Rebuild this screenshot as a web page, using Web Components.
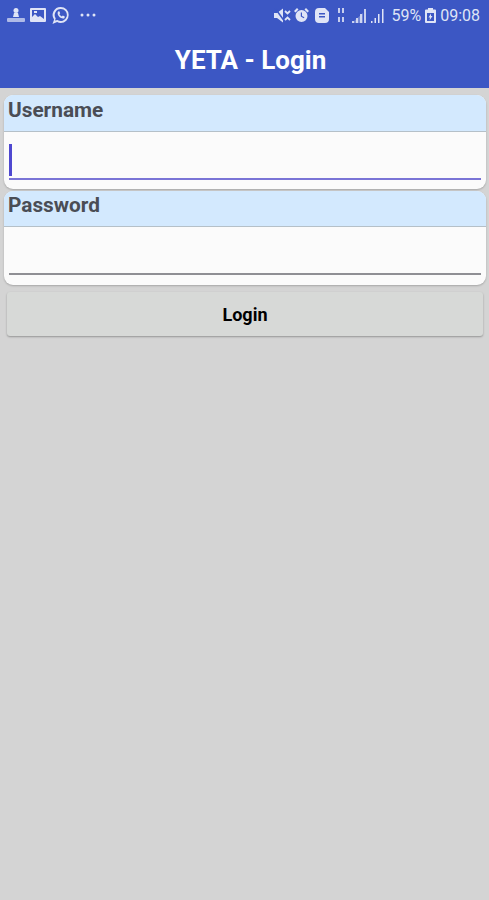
<!DOCTYPE html>
<html>
<head>
<meta charset="utf-8">
<title>YETA - Login</title>
<style>
  html, body { margin: 0; padding: 0; height: 100%; }
  body { background: #d4d4d4; font-family: Roboto, "Liberation Sans", sans-serif; }
</style>
</head>
<body>
<status-bar></status-bar>
<app-header>YETA - Login</app-header>
<login-form>
  <login-field label="Username" focused style="--label-height: 37px; --label-line: 31px"></login-field>
  <login-field label="Password"></login-field>
  <login-button>Login</login-button>
</login-form>

<script>
class StatusBar extends HTMLElement {
  constructor() {
    super();
    this.attachShadow({ mode: 'open' });
    this.shadowRoot.innerHTML = `
      <style>
        :host {
          display: flex;
          justify-content: space-between;
          align-items: center;
          height: 30px;
          background: #3c57c4;
          color: #dfe4f6;
          font: 400 16px Roboto, "Liberation Sans", sans-serif;
        }
        .side { display: flex; align-items: center; }
        .left { padding-left: 7px; }
        .right { padding-right: 9px; }
        svg { display: block; fill: #dfe4f6; }
      </style>
      <div class="side left">
        <svg width="18" height="18" viewBox="0 0 18 18" style="margin-right:5px">
          <circle cx="9" cy="4.500" r="2.500"/><path d="M7 7h4l1 4H6z"/>
          <rect x="0" y="12" width="18" height="4" rx="1" opacity=".7"/>
        </svg>
        <svg width="16" height="14" viewBox="0 0 16 14" style="margin-right:6px">
          <path fill-rule="evenodd" d="M1 0h14a1 1 0 0 1 1 1v12a1 1 0 0 1-1 1H1a1 1 0 0 1-1-1V1a1 1 0 0 1 1-1zm1 2v7l3-3 3 3 2-1 4 3V2zm2 1h3v2H4z"/>
        </svg>
        <svg width="17" height="17" viewBox="0 0 17 17" style="margin-right:10px">
          <path fill-rule="evenodd" d="M8.700 0a8 8 0 0 1 0 16 8 8 0 0 1-3.600-.9L.5 17l1.600-4.400A8 8 0 0 1 8.700 0zm0 2a6 6 0 0 0-5 9.300l-.6 2.300 2.300-.7A6 6 0 1 0 8.700 2z"/>
          <path d="M6 4.500l1.300-.2.900 2-.8 1a5 5 0 0 0 2.400 2.200l1-.9 2 1-.3 1.400c-.8.800-2.300.7-4-.3-2-1.200-3.600-3.800-2.500-6.200z"/>
        </svg>
        <svg width="18" height="4" viewBox="0 0 18 4">
          <circle cx="3" cy="2" r="1.500"/><circle cx="9" cy="2" r="1.500"/><circle cx="15" cy="2" r="1.500"/>
        </svg>
      </div>
      <div class="side right">
        <svg width="17" height="15" viewBox="0 0 17 15" style="margin-right:3px">
          <path d="M0 5h3l6-4.500v14L3 10H0z"/><path d="M1 0l10 14" stroke="#3c57c4" stroke-width="1.500"/>
          <path d="M11 3l2.500 2.500L16 3M11 12l2.500-2.500L16 12" fill="none" stroke="#dfe4f6" stroke-width="1.800"/>
        </svg>
        <svg width="15" height="15" viewBox="0 0 15 15" style="margin-right:6px">
          <path fill-rule="evenodd" d="M7.500 2a6 6 0 1 1 0 12 6 6 0 0 1 0-12zm-.7 2.500v4l3 1.800.6-1-2.400-1.400V4.500z"/>
          <path d="M0 3l3-3 1.500 1.500-3 3zM15 3l-3-3-1.500 1.500 3 3z"/>
        </svg>
        <svg width="14" height="15" viewBox="0 0 14 15" style="margin-right:8px">
          <path fill-rule="evenodd" d="M4 0h6l4 4v7a4 4 0 0 1-4 4H4a4 4 0 0 1-4-4V4a4 4 0 0 1 4-4zm0 5v1.500h6V5zm0 3v1.500h6V8z"/>
        </svg>
        <svg width="8" height="15" viewBox="0 0 8 15" style="margin-right:7px">
          <path d="M1 0h2v5H1zM5 0h2v5H5zM1 9h2v5H1zM5 9h2v5H5z" opacity=".85"/>
        </svg>
        <svg width="16" height="15" viewBox="0 0 16 15" style="margin-right:3px">
          <path d="M0 15l11-10v10z" opacity=".35"/>
          <path d="M0 13h2v2H0zM4 10h2v5H4zM8 6h2v9H8zM12 1h2v14h-2z" opacity=".85"/>
        </svg>
        <svg width="14" height="15" viewBox="0 0 14 15" style="margin-right:6px">
          <path d="M0 13h1.500v2H0zM3.500 10H5v5H3.500zM7 6h1.500v9H7zM11 1h1.500v14H11z"/>
        </svg>
        <span style="margin-right:4px">59%</span>
        <svg width="11" height="15" viewBox="0 0 11 15" style="margin-right:4px">
          <path fill-rule="evenodd" d="M3 0h5v1.500h2a1 1 0 0 1 1 1V14a1 1 0 0 1-1 1H1a1 1 0 0 1-1-1V2.500a1 1 0 0 1 1-1h2zM2 5v8h7V5zM6 5.500 3.500 9.500H5L4.500 12.500 7.500 8H6z"/>
        </svg>
        <span>09:08</span>
      </div>
    `;
  }
}

class AppHeader extends HTMLElement {
  constructor() {
    super();
    this.attachShadow({ mode: 'open' });
    this.shadowRoot.innerHTML = `
      <style>
        :host {
          display: flex;
          justify-content: center;
          align-items: center;
          height: 58px;
          padding: 2px 0 0 12px;
          box-sizing: border-box;
          background: #3c57c4;
          color: #fff;
          font: 700 26px Roboto, "Liberation Sans", sans-serif;
        }
      </style>
      <slot></slot>
    `;
  }
}

class LoginForm extends HTMLElement {
  constructor() {
    super();
    this.attachShadow({ mode: 'open' });
    this.shadowRoot.innerHTML = `
      <style>
        :host {
          display: flex;
          flex-direction: column;
          gap: 2px;
          padding: 7px 3px 0 4px;
        }
      </style>
      <slot></slot>
    `;
  }
}

class LoginField extends HTMLElement {
  constructor() {
    super();
    this.attachShadow({ mode: 'open' });
    this.shadowRoot.innerHTML = `
      <style>
        :host {
          display: block;
          height: 94px;
          border-radius: 9px;
          overflow: hidden;
          background: #fbfbfb;
          box-shadow: 0 1px 2px rgba(0, 0, 0, .22);
          font-family: Roboto, "Liberation Sans", sans-serif;
        }
        .label {
          height: var(--label-height, 36px);
          box-sizing: border-box;
          padding-left: 4px;
          line-height: var(--label-line, 29px);
          background: #d3e9fe;
          border-bottom: 1px solid #b5c0c8;
          color: #4a4d55;
          font-size: 20.800px;
          font-weight: 700;
        }
        .input {
          position: relative;
          height: 46px;
          margin: 0 5px;
          border-bottom: 2px solid #8f8f94;
        }
        :host([focused]) .input { border-bottom-color: #7a74d6; }
        .caret {
          display: none;
          position: absolute;
          left: 0;
          top: 12px;
          width: 3px;
          height: 32px;
          background: #4f48d0;
        }
        :host([focused]) .caret { display: block; }
      </style>
      <div class="label"></div>
      <div class="input"><span class="caret"></span></div>
    `;
    this.shadowRoot.querySelector('.label').textContent = this.getAttribute('label');
  }
}

class LoginButton extends HTMLElement {
  constructor() {
    super();
    this.attachShadow({ mode: 'open' });
    this.shadowRoot.innerHTML = `
      <style>
        :host {
          display: flex;
          justify-content: center;
          align-items: center;
          height: 44px;
          margin: 5px 3px 0 3px;
          border-radius: 3px;
          background: #d7d9d7;
          box-shadow: 0 1px 2px rgba(0, 0, 0, .3);
          color: #000;
          font: 700 18px Roboto, "Liberation Sans", sans-serif;
        }
      </style>
      <slot></slot>
    `;
  }
}

customElements.define('status-bar', StatusBar);
customElements.define('app-header', AppHeader);
customElements.define('login-form', LoginForm);
customElements.define('login-field', LoginField);
customElements.define('login-button', LoginButton);
</script>
</body>
</html>
